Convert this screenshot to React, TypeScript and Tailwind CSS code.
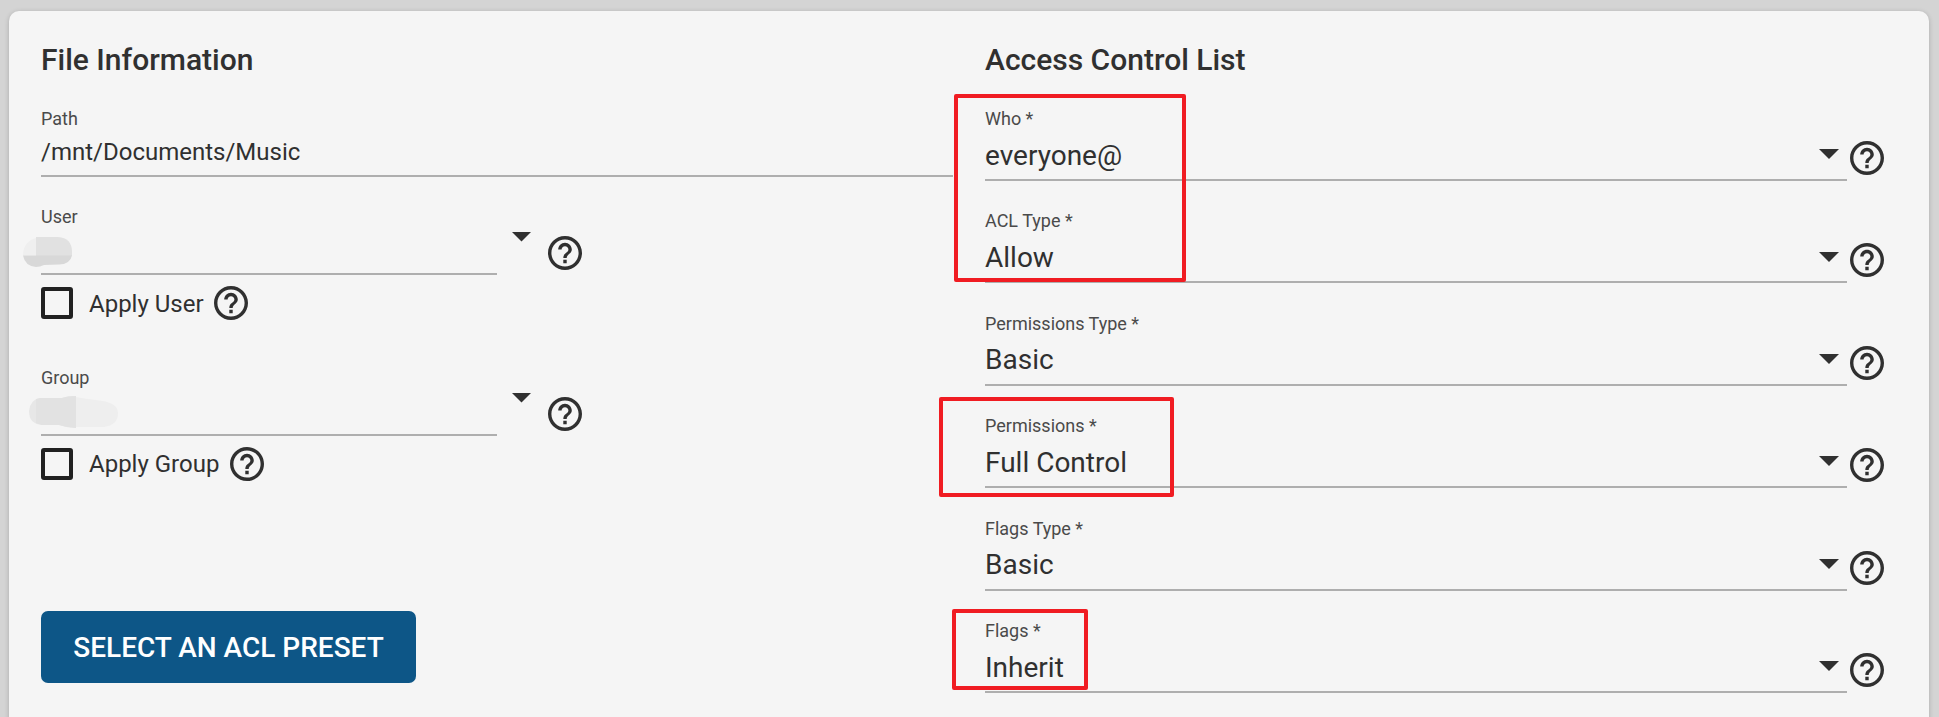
type Row = { label: string; value: string };

const rows: Row[] = [
  { label: 'Who *', value: 'everyone@' },
  { label: 'ACL Type *', value: 'Allow' },
  { label: 'Permissions Type *', value: 'Basic' },
  { label: 'Permissions *', value: 'Full Control' },
  { label: 'Flags Type *', value: 'Basic' },
  { label: 'Flags *', value: 'Inherit' },
];

function Help() {
  return (
    <svg viewBox="2 2 20 20" className="size-[34px] shrink-0 fill-[#303030]">
      <path d="M11 18h2v-2h-2v2zm1-16C6.48 2 2 6.48 2 12s4.48 10 10 10 10-4.48 10-10S17.52 2 12 2zm0 18c-4.41 0-8-3.59-8-8s3.59-8 8-8 8 3.59 8 8-3.59 8-8 8zm0-14c-2.21 0-4 1.79-4 4h2c0-1.1.9-2 2-2s2 .9 2 2c0 2-3 1.75-3 5h2c0-2.25 3-2.5 3-5 0-2.21-1.79-4-4-4z" />
    </svg>
  );
}

function Caret({ className }: { className: string }) {
  return (
    <svg viewBox="0 0 20 10" preserveAspectRatio="none" className={`shrink-0 fill-[#303030] ${className}`}>
      <path d="M0 0h20L10 10z" />
    </svg>
  );
}

function SelectRow({ label, value }: Row) {
  return (
    <div className="flex h-[102.4px] items-end">
      <div className="w-[862px] border-b-2 border-[#aeaeae]">
        <div className="text-[18px] leading-[20px] text-[#4a4a4a]">{label}</div>
        <div className="mt-[9.6px] flex justify-between pr-2 pb-[6.4px]">
          <span className="text-[28px] leading-[34px]">{value}</span>
          <Caret className="mt-[10.6px] h-[10px] w-[20px]" />
        </div>
      </div>
      <div className="mb-[6px] ml-[3px]">
        <Help />
      </div>
    </div>
  );
}

function Redaction({ kind }: { kind: 'User' | 'Group' }) {
  if (kind === 'User') {
    return (
      <svg viewBox="0 0 52 36" className="absolute top-[9px] -left-[19px] h-[36px] w-[52px]">
        <path d="M1 19.5C1 10 6 4 14 2v17.5z" fill="#efefef" />
        <path d="M14 1h22q14 1 14 15v4H14z" fill="#e1e1e1" />
        <path d="M1 19.500h49q-2 9-13 9l-15 .5q-4 2-8 2Q3 30 1 19.500z" fill="#d8d8d8" />
      </svg>
    );
  }
  return (
    <svg viewBox="0 0 92 36" className="absolute top-[6px] -left-[13px] h-[36px] w-[92px]">
      <path d="M12 4h22q5-2 14-2v32q-8 0-17-3H14Q1 30 1 17 2 6 12 4z" fill="#e7e7e7" />
      <path d="M8 5l4-1h22q5-2 14-2v32q-8 0-17-3H14l-6-2z" fill="#e2e2e2" />
      <path d="M48 3q10 2 20 3 22 2 22 13 0 12-14 14H48z" fill="#eeeeee" />
    </svg>
  );
}

function Principal({ kind }: { kind: 'User' | 'Group' }) {
  return (
    <section>
      <div className="flex h-[68px] items-start">
        <div className="w-[456px] border-b-2 border-[#aeaeae]">
          <div className="text-[18px] leading-[20px] text-[#4a4a4a]">{kind}</div>
          <div className="relative h-[46px]">
            <Redaction kind={kind} />
          </div>
        </div>
        <Caret className="mt-[25px] ml-[14.5px] h-[9.5px] w-[19px]" />
        <div className="mt-[29px] ml-[17.5px]">
          <Help />
        </div>
      </div>
      <label className="mt-[11px] flex h-[34px] items-center">
        <span className="size-[32px] rounded-[3px] border-4 border-[#212121]" />
        <span
          className={`mr-[10.7px] ml-[16px] text-[24px] leading-[34px] ${kind === 'User' ? 'pt-[1px]' : 'pt-0'}`}
        >
          Apply {kind}
        </span>
        <Help />
      </label>
    </section>
  );
}

export default function App() {
  return (
    <main
      className="relative h-[717px] overflow-hidden bg-[#d4d4d4] pt-[11px] pl-[9px] text-[#303030]"
      style={{ fontFamily: 'Roboto, sans-serif' }}
    >
      <div className="flex h-[740px] w-[1920px] rounded-[10px] bg-[#f5f5f5] pt-[31px] pl-8 shadow-[0_1px_5px_rgba(0,0,0,0.2)]">
        <div className="w-[944px]">
          <h2 className="text-[30px] leading-[36px] font-medium">File Information</h2>
          <div className="mt-[31px] w-[912px] border-b-2 border-[#aeaeae] pb-[6px]">
            <div className="text-[18px] leading-[20px] text-[#4a4a4a]">Path</div>
            <div className="mt-[6px] text-[24px] leading-[34px]">/mnt/Documents/Music</div>
          </div>
          <div className="mt-[30px] flex flex-col gap-[48px]">
            <Principal kind="User" />
            <Principal kind="Group" />
          </div>
          <button className="mt-[130px] h-[72px] w-[375px] rounded-[7px] bg-[#0d5687] pt-[2px] text-[28px] font-medium text-white">
            SELECT AN ACL PRESET
          </button>
        </div>
        <div>
          <h2 className="text-[30px] leading-[36px] font-medium">Access Control List</h2>
          <div className="mt-[0.6px]">
            {rows.map((row) => (
              <SelectRow key={row.label} {...row} />
            ))}
          </div>
        </div>
      </div>
      <div className="absolute top-[94px] left-[954px] h-[188px] w-[232px] rounded-[2px] border-4 border-[#f01c22]" />
      <div className="absolute top-[397px] left-[939px] h-[100px] w-[235px] rounded-[2px] border-4 border-[#f01c22]" />
      <div className="absolute top-[609px] left-[952px] h-[81px] w-[136px] rounded-[2px] border-4 border-[#f01c22]" />
    </main>
  );
}
